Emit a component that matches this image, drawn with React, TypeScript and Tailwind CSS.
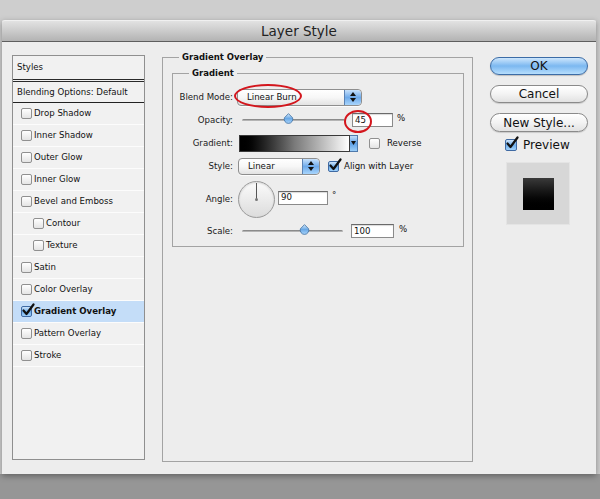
import React from "react";

const Check = ({ className = "" }: { className?: string }) => (
  <svg className={className} width="14" height="14" viewBox="0 0 14 14">
    <path d="M2.5 7.5 L5.5 11 L12.5 1.5" fill="none" stroke="#111" strokeWidth="2.2" strokeLinecap="round" strokeLinejoin="round" />
  </svg>
);

const Box = ({ checked = false }: { checked?: boolean }) =>
  checked ? (
    <div className="relative w-[11px] h-[11px] shrink-0 rounded-[2px] border border-[#3f6aa3] bg-gradient-to-b from-[#cfe5fb] via-[#6eaeea] to-[#9fd0fb]">
      <Check className="absolute left-[-1px] top-[-4px]" />
    </div>
  ) : (
    <div className="w-[11px] h-[11px] shrink-0 rounded-[2px] border border-[#909090] bg-gradient-to-b from-white to-[#e4e4e4]" />
  );

const Thumb = () => (
  <svg width="11" height="11" viewBox="0 0 11 11">
    <defs>
      <linearGradient id="tg" x1="0" y1="0" x2="0" y2="1">
        <stop offset="0" stopColor="#d6ebfd" />
        <stop offset="0.5" stopColor="#6aa9e6" />
        <stop offset="1" stopColor="#a9d4fb" />
      </linearGradient>
    </defs>
    <path d="M5.5 0.6 L9.6 4.8 A4.3 4.3 0 1 1 1.4 4.8 Z" fill="url(#tg)" stroke="#41709f" strokeWidth="0.8" />
  </svg>
);

const Slider = ({ width, thumbAt }: { width: number; thumbAt: number }) => (
  <div className="relative h-[11px] flex items-center" style={{ width }}>
    <div className="w-full h-[3px] rounded-full bg-gradient-to-b from-[#777] to-[#c9c9c9] border-b border-[#eee]" />
    <div className="absolute top-[-2px]" style={{ left: thumbAt - 5.5 }}>
      <Thumb />
    </div>
  </div>
);

const Stepper = () => (
  <div className="w-[17px] h-full rounded-r-[4px] border-l border-[#5b82b3] bg-gradient-to-b from-[#c7e1fb] via-[#6eaaea] to-[#a8d5fc] flex flex-col items-center justify-center gap-[2px]">
    <svg width="6" height="4" viewBox="0 0 6 4"><path d="M3 0 L6 4 L0 4 Z" fill="#111" /></svg>
    <svg width="6" height="4" viewBox="0 0 6 4"><path d="M0 0 L6 0 L3 4 Z" fill="#111" /></svg>
  </div>
);

const Dropdown = ({ width, text }: { width: number; text: string }) => (
  <div
    className="h-[17px] flex items-center rounded-[4px] border border-[#8e8e8e] bg-gradient-to-b from-white via-[#f7f7f7] to-[#e3e3e3] shadow-[0_1px_0_rgba(255,255,255,0.8)]"
    style={{ width }}
  >
    <div className="flex-1 pl-[9px] text-[8.6px] text-[#111]">{text}</div>
    <Stepper />
  </div>
);

const Input = ({ width, value, h = 14 }: { width: number; value: string; h?: number }) => (
  <div
    className="flex items-center bg-white border border-[#8a8a8a] border-t-[#6a6a6a] pl-[2px] text-[8.6px] text-[#111] shadow-[inset_0_1px_1px_rgba(0,0,0,0.15)]"
    style={{ width, height: h }}
  >
    {value}
  </div>
);

const Label = ({ children }: { children: React.ReactNode }) => (
  <div className="w-[60px] text-right text-[8.6px] text-[#1a1a1a] shrink-0">{children}</div>
);

const items: { label: string; indent?: boolean; checked?: boolean }[] = [
  { label: "Drop Shadow" },
  { label: "Inner Shadow" },
  { label: "Outer Glow" },
  { label: "Inner Glow" },
  { label: "Bevel and Emboss" },
  { label: "Contour", indent: true },
  { label: "Texture", indent: true },
  { label: "Satin" },
  { label: "Color Overlay" },
  { label: "Gradient Overlay", checked: true },
  { label: "Pattern Overlay" },
  { label: "Stroke" },
];

export default function App() {
  return (
    <div className="relative w-[600px] h-[499px] overflow-hidden bg-[#cecece] font-['DejaVu_Sans',sans-serif]">
      <div className="h-[20px]" />
      <div className="relative z-10 ml-[2px] w-[594px] h-[454px] flex flex-col shadow-[0_2px_6px_rgba(0,0,0,0.35)]">
        <div className="h-[22px] shrink-0 flex items-center justify-center bg-gradient-to-b from-[#e2e2e2] via-[#cbcbcb] to-[#b3b3b3] border-t border-[#f0f0f0] border-b border-b-[#5e5e5e] rounded-t-[3px]">
          <span className="text-[13.5px] text-[#222]">Layer Style</span>
        </div>
        <div className="flex-1 bg-[#ededed] flex pl-[10px]">
          {/* Styles list */}
          <div className="pt-[13px]">
            <div className="w-[133px] h-[405px] border border-[#8f8f8f] bg-[#f1f1f1] text-[8.6px] text-[#111]">
              <div className="h-[23px] flex items-center pl-[4px]">Styles</div>
              <div className="h-[3px] border-y border-[#2a2a2a]" />
              <div className="h-[21px] flex items-center pl-[4px] border-b border-[#222]">Blending Options: Default</div>
              {items.map((it) => (
                <div
                  key={it.label}
                  className={`h-[22px] flex items-center gap-[2px] border-b border-[#fcfcfc] ${it.indent ? "pl-[20px]" : "pl-[8px]"} ${it.checked ? "bg-[#c4ddf8] font-bold" : ""}`}
                >
                  <Box checked={it.checked} />
                  <span>{it.label}</span>
                </div>
              ))}
            </div>
          </div>

          {/* Middle */}
          <div className="ml-[17px] pt-[9px]">
            <fieldset className="w-[311px] h-[411px] border border-[#a3a3a3] p-0 m-0">
              <legend className="ml-[16px] px-[3px] text-[8.5px] font-bold text-[#111] leading-[12px]">Gradient Overlay</legend>
              <fieldset className="ml-[9px] mt-[4px] w-[292px] border border-[#a3a3a3] p-0 pb-[5px]">
                <legend className="ml-[16px] px-[3px] text-[8.5px] font-bold text-[#111] leading-[12px]">Gradient</legend>
                <div className="pt-[8px] flex flex-col">
                  <div className="h-[20px] flex items-center">
                    <Label>Blend Mode:</Label>
                    <div className="ml-[4px]"><Dropdown width={125} text="Linear Burn" /></div>
                  </div>
                  <div className="mt-[3px] h-[20px] flex items-center">
                    <Label>Opacity:</Label>
                    <div className="ml-[9px]"><Slider width={103} thumbAt={46} /></div>
                    <div className="ml-[7px]"><Input width={41} value="45" h={14} /></div>
                    <span className="ml-[4px] text-[8.6px] text-[#111] -mt-[3px]">%</span>
                  </div>
                  <div className="mt-[3px] h-[20px] flex items-center">
                    <Label>Gradient:</Label>
                    <div className="ml-[6px] flex h-[17px]">
                      <div className="w-[111px] h-full border border-[#3a3a3a] bg-gradient-to-r from-black via-[#7a7a7a] to-white" />
                      <div className="w-[8px] h-full border border-l-0 border-[#4f79ab] bg-gradient-to-b from-[#c3e0fb] via-[#5d9fe5] to-[#9ccff9] flex items-center justify-center">
                        <svg width="5" height="4" viewBox="0 0 5 4"><path d="M0 0 L5 0 L2.5 4 Z" fill="#111" /></svg>
                      </div>
                    </div>
                    <div className="ml-[11px]"><Box /></div>
                    <span className="ml-[7px] text-[8.6px] text-[#111]">Reverse</span>
                  </div>
                  <div className="mt-[3px] h-[20px] flex items-center">
                    <Label>Style:</Label>
                    <div className="ml-[5px]"><Dropdown width={82} text="Linear" /></div>
                    <div className="ml-[8px]"><Box checked /></div>
                    <span className="ml-[5px] text-[8.6px] text-[#111]">Align with Layer</span>
                  </div>
                  <div className="mt-[4px] h-[38px] flex items-center">
                    <Label>Angle:</Label>
                    <div className="ml-[5px] relative w-[37px] h-[37px] rounded-full border border-[#9a9a9a] bg-gradient-to-b from-[#fbfbfb] to-[#dcdcdc] shadow-[inset_0_1px_2px_rgba(0,0,0,0.15)]">
                      <div className="absolute left-[17px] top-[1px] w-[1px] h-[17px] bg-[#555]" />
                      <div className="absolute left-[16px] top-[16px] w-[3px] h-[3px] rounded-full bg-[#777]" />
                    </div>
                    <div className="ml-[3px] -mt-[3px]"><Input width={50} value="90" /></div>
                    <span className="ml-[4px] text-[8.6px] text-[#111] -mt-[8px]">°</span>
                  </div>
                  <div className="mt-[3px] h-[20px] flex items-center">
                    <Label>Scale:</Label>
                    <div className="ml-[9px]"><Slider width={101} thumbAt={62} /></div>
                    <div className="ml-[8px]"><Input width={43} value="100" /></div>
                    <span className="ml-[5px] text-[8.6px] text-[#111] -mt-[3px]">%</span>
                  </div>
                </div>
              </fieldset>
            </fieldset>
          </div>

          {/* Right */}
          <div className="ml-[17px] pt-[15px] w-[98px] flex flex-col">
            <div className="h-[18px] rounded-full border border-[#3c6ca6] bg-gradient-to-b from-[#cde6fc] via-[#7cb8f0] to-[#b6defd] flex items-center justify-center text-[12px] text-[#111] shadow-[0_1px_1px_rgba(0,0,0,0.2)]">OK</div>
            <div className="mt-[10px] h-[18px] rounded-full border border-[#8a8a8a] bg-gradient-to-b from-white via-[#f3f3f3] to-[#e2e2e2] flex items-center justify-center text-[12px] text-[#111] shadow-[0_1px_1px_rgba(0,0,0,0.15)]">Cancel</div>
            <div className="mt-[10px] h-[19px] rounded-full border border-[#8a8a8a] bg-gradient-to-b from-white via-[#f3f3f3] to-[#e2e2e2] flex items-center justify-center text-[12px] text-[#111] shadow-[0_1px_1px_rgba(0,0,0,0.15)]">New Style...</div>
            <div className="mt-[6px] h-[14px] flex items-center pl-[15px]">
              <div className="relative w-[12px] h-[12px] rounded-[2px] border border-[#3f6aa3] bg-gradient-to-b from-[#cfe5fb] via-[#6eaeea] to-[#9fd0fb]">
                <Check className="absolute left-[-1px] top-[-4px]" />
              </div>
              <span className="ml-[6px] text-[12px] text-[#111]">Preview</span>
            </div>
            <div className="mt-[10px] ml-[16px] w-[64px] h-[63px] bg-[#d7d7d7] border border-[#e4e4e4] flex items-center justify-center">
              <div className="w-[31px] h-[32px] bg-gradient-to-b from-[#3a3a3a] to-black" />
            </div>
          </div>
        </div>
      </div>
      <div className="h-[25px] w-full bg-[#969696]" />

      {/* red annotation ellipses */}
      <div className="absolute z-20 left-[234px] top-[84px] w-[68px] h-[24px] rounded-[50%] border-2 border-[#d3161d]" />
      <div className="absolute z-20 left-[344px] top-[110px] w-[28px] h-[23px] rounded-[50%] border-2 border-[#d3161d]" />
    </div>
  );
}
